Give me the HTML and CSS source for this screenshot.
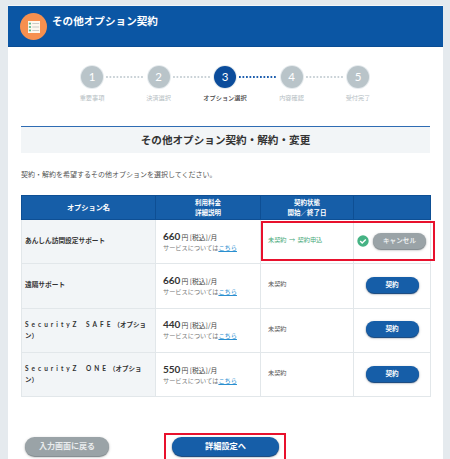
FILE: index.html
```html
<!DOCTYPE html>
<html lang="ja">
<head>
<meta charset="utf-8">
<title>その他オプション契約</title>
<link rel="stylesheet" href="styles.css">
</head>
<body>
<main class="card">
  <header class="head">
    <span class="head-icon">
      <svg width="12" height="12" viewBox="0 0 14 14">
        <rect x="0" y="0" width="14" height="14" fill="#fdf8ee"/>
        <rect x="1" y="2" width="2.5" height="2" fill="#58b98a"/>
        <rect x="1" y="6" width="2.5" height="2" fill="#58b98a"/>
        <rect x="1" y="10" width="2.5" height="2" fill="#58b98a"/>
        <rect x="5" y="2.5" width="8" height="1" fill="#c4c4c0"/>
        <rect x="5" y="6.5" width="8" height="1" fill="#c4c4c0"/>
        <rect x="5" y="10.5" width="8" height="1" fill="#c4c4c0"/>
      </svg>
    </span>
    <h1 class="head-title">その他オプション契約</h1>
  </header>

  <ol class="steps">
    <li class="step"><span class="num">1</span><span class="lbl">重要事項</span></li>
    <li class="step"><span class="num">2</span><span class="lbl">決済選択</span></li>
    <li class="step on"><span class="num">3</span><span class="lbl">オプション選択</span></li>
    <li class="step"><span class="num">4</span><span class="lbl">内容確認</span></li>
    <li class="step"><span class="num">5</span><span class="lbl">受付完了</span></li>
  </ol>

  <section class="body">
    <h2 class="sec">その他オプション契約・解約・変更</h2>
    <p class="lead">契約・解約を希望するその他オプションを選択してください。</p>

    <div class="tbl-wrap">
      <table class="tbl">
        <colgroup><col class="c1"><col class="c2"><col class="c3"><col class="c4"></colgroup>
        <thead>
          <tr><th class="th-name">オプション名</th><th>利用料金<br>詳細説明</th><th>契約状態<br>開始／終了日</th><th></th></tr>
        </thead>
        <tbody>
          <tr>
            <td class="name">あんしん訪問設定サポート</td>
            <td><span class="price"><b>660</b><span class="unit">円 [税込]/月</span></span><span class="svc">サービスについては<a href="#">こちら</a></span></td>
            <td class="st green">未契約 <span class="arrow">→</span> 契約申込</td>
            <td class="act"><span class="actrow">
              <svg class="chk" width="12" height="12" viewBox="0 0 12 12"><circle cx="6" cy="6" r="5.7" fill="#45b384"/><path d="M3.2 6.1l2 2 3.6-3.7" fill="none" stroke="#fff" stroke-width="1.4"/></svg>
              <a class="btn gray small" href="#">キャンセル</a></span></td>
          </tr>
          <tr>
            <td class="name">遠隔サポート</td>
            <td><span class="price"><b>660</b><span class="unit">円 [税込]/月</span></span><span class="svc">サービスについては<a href="#">こちら</a></span></td>
            <td class="st">未契約</td>
            <td class="act"><a class="btn blue small" href="#">契約</a></td>
          </tr>
          <tr>
            <td class="name wide"><span class="latin">SecurityZ SAFE</span>（オプショ<br>ン）</td>
            <td><span class="price"><b>440</b><span class="unit">円 [税込]/月</span></span><span class="svc">サービスについては<a href="#">こちら</a></span></td>
            <td class="st">未契約</td>
            <td class="act"><a class="btn blue small" href="#">契約</a></td>
          </tr>
          <tr>
            <td class="name wide"><span class="latin">SecurityZ ONE</span>（オプショ<br>ン）</td>
            <td><span class="price"><b>550</b><span class="unit">円 [税込]/月</span></span><span class="svc">サービスについては<a href="#">こちら</a></span></td>
            <td class="st">未契約</td>
            <td class="act"><a class="btn blue small" href="#">契約</a></td>
          </tr>
        </tbody>
      </table>
      <span class="mark mark-row"></span>
    </div>

    <div class="foot">
      <a class="btn gray back" href="#">入力画面に戻る</a>
      <span class="next-wrap">
        <a class="btn blue next" href="#">詳細設定へ</a>
        <span class="mark mark-next"></span>
      </span>
    </div>
  </section>
</main>
</body>
</html>
```

FILE: styles.css
```css
* { box-sizing: border-box; }
html, body { margin: 0; height: 459px; overflow: hidden; }
body {
  background: #e5eaee;
  padding: 5px 7px 0 8px;
  font-family: Lato, "Noto Sans CJK JP", sans-serif;
  color: #444;
}
.card { background: #fff; height: 454px; border-top: 1px solid #f4f6f8; }

.head {
  height: 41px;
  background: #0b56a4;
  display: flex;
  align-items: flex-start;
  padding: 7px 0 0 12px;
  border-bottom: 1px solid #0a4d94;
}
.head-icon {
  width: 27px; height: 27px;
  border-radius: 50%;
  background: #f7904f;
  display: flex; align-items: center; justify-content: center;
  flex: none;
}
.head-title {
  margin: 0 0 0 5px;
  font: 700 10.6px/16px "Noto Sans CJK JP", sans-serif;
  color: #fff;
}

.steps {
  list-style: none;
  margin: 0;
  padding: 19px 0 0 50.75px;
  display: flex;
  align-items: flex-start;
  height: 79px;
}
.step {
  width: 66.5px;
  flex: none;
  display: flex; flex-direction: column; align-items: center;
  position: relative;
}
.step:not(:last-child)::after {
  content: "";
  position: absolute;
  top: 10px;
  left: calc(50% + 14px);
  width: 38px;
  height: 2px;
  background: radial-gradient(circle at 1px 1px, #c5ced3 0.7px, transparent 1px) 0 0 / 3.5px 2px repeat-x;
}
.step.on::after {
  background: radial-gradient(circle at 1px 1px, #1f5fae 0.9px, transparent 1.1px) 0 0 / 3.5px 2px repeat-x;
}
.num {
  width: 22px; height: 22px;
  border-radius: 50%;
  background: #b9c4c9;
  box-shadow: 0 0 0 1px #e6ebee;
  color: #fff;
  font: 400 11.5px/22px Lato, sans-serif;
  text-align: center;
}
.lbl {
  margin-top: 5px;
  font: 400 6.2px/10px "Noto Sans CJK JP", sans-serif;
  color: #b5bec3;
  white-space: nowrap;
}
.step.on .num { background: #0b4c9b; }
.step.on .lbl { color: #444; font-weight: 500; }

.body { padding: 0 13px; }
.sec {
  margin: 0;
  height: 27px;
  background: #f2f5f7;
  border-top: 1px solid #2f6cb3;
  font: 700 10.6px/25px "Noto Sans CJK JP", sans-serif;
  color: #333;
  text-align: center;
}
.lead {
  margin: 15px 0 0;
  font: 400 7px/13px "Noto Sans CJK JP", sans-serif;
  color: #555;
}

.tbl-wrap { position: relative; margin-top: 14px; }
.tbl {
  width: 409px;
  border-collapse: collapse;
  table-layout: fixed;
  font: 400 6.2px/10px "Noto Sans CJK JP", sans-serif;
}
.c1 { width: 134px; }
.c2 { width: 105px; }
.c3 { width: 93px; }
.c4 { width: 77px; }
.tbl th {
  height: 24px;
  padding: 0;
  background: #165ea8;
  color: #fff;
  font: 700 6.5px/9.5px "Noto Sans CJK JP", sans-serif;
  text-align: center;
  border: 1px solid #0e4f94;
}
.tbl th.th-name { font-size: 7.2px; }
.tbl tbody tr { height: 44.3px; }
.tbl td {
  border: 1px solid #e2e7ea;
  padding: 0 0 0 7px;
  vertical-align: middle;
  color: #555;
}
.tbl td.name {
  background: #f2f5f7;
  padding: 0 3px 3px;
  font: 700 6.7px/9px "Noto Sans CJK JP", sans-serif;
  color: #333;
}
.tbl td.wide { font-size: 6.5px; line-height: 10px; padding: 0 0 2px 3px; white-space: nowrap; }
.latin { letter-spacing: 3px; word-spacing: 2px; font-family: Lato, sans-serif; }
.price { display: block; line-height: 11px; color: #444; }
.price b { font: 700 10px/11px Lato, sans-serif; color: #333; margin-right: 1px; }
.unit { font-size: 6.8px; }
.svc { display: block; font-size: 6.2px; line-height: 10px; color: #777; white-space: nowrap; }
.svc a { color: #2a8fd0; text-decoration: underline; }
.tbl td.st { font-size: 6.2px; padding-bottom: 3px; }
.tbl td.green { color: #45a878; }
.arrow { margin: 0 1px; }
.tbl td.act { padding: 0 0 2px; text-align: center; }
.actrow { display: flex; align-items: center; justify-content: flex-end; gap: 4px; padding-right: 4px; }
.chk { flex: none; }

.btn {
  display: inline-block;
  border-radius: 10px;
  color: #fff;
  text-align: center;
  text-decoration: none;
  font-family: "Noto Sans CJK JP", sans-serif;
  font-weight: 700;
}
.btn.blue { background: #165ea8; box-shadow: 0 1px 1px #0c3f78, 0 1px 3px rgba(0,0,0,.25); }
.btn.gray { background: #9aa3a7; box-shadow: 0 1px 1px #7f888c, 0 1px 3px rgba(0,0,0,.25); color: #e9eced; }
.small { width: 53px; height: 16px; font-size: 6.6px; line-height: 14px; }

.foot {
  display: flex;
  align-items: flex-start;
  padding: 0 0 0 4px;
  margin-top: 40px;
}
.back { width: 84px; height: 19px; font-size: 8px; line-height: 17px; }
.next-wrap { position: relative; margin-left: 63px; }
.next { display: block; width: 107px; height: 19px; font-size: 8.2px; line-height: 17px; }

.mark { position: absolute; border: 2.5px solid #e8112d; pointer-events: none; }
.mark-row { left: 240px; top: 26px; width: 174px; height: 40px; }
.mark-next { left: -8px; top: -4px; width: 122px; height: 40px; }
```
